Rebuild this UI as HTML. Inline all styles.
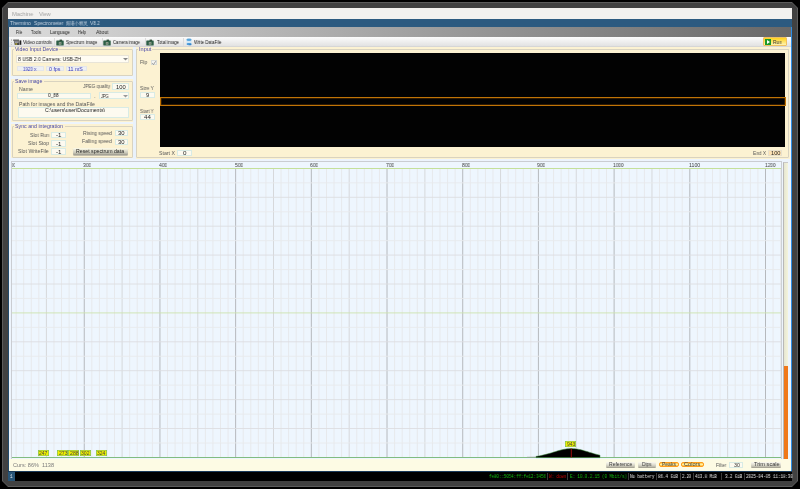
<!DOCTYPE html><html><head><meta charset="utf-8"><style>*{margin:0;padding:0;box-sizing:border-box}
html,body{width:800px;height:489px;overflow:hidden;background:#000;font-family:"Liberation Sans",sans-serif;position:relative}
.a{position:absolute}
.t{position:absolute;white-space:pre;line-height:1;transform-origin:0 0;will-change:transform}
.m{font-family:"Liberation Mono",monospace}
</style></head><body>
<div class="a" style="left:2px;top:2px;width:796px;height:485px;background:#5c5c5c;clip-path:polygon(6px 0,790px 0,796px 6px,796px 479px,790px 485px,6px 485px,0 479px,0 6px)"></div>
<div class="a" style="left:3px;top:3px;width:794px;height:483px;background:#414141;clip-path:polygon(5px 0,789px 0,794px 5px,794px 478px,789px 483px,5px 483px,0 478px,0 5px)"></div>
<div class="a" style="left:8px;top:8px;width:784px;height:11px;background:#f2f1ef"></div>
<div class="a" style="left:8px;top:19px;width:784px;height:8px;background:#2c5a80"></div>
<div class="a" style="left:8px;top:27px;width:784px;height:444px;background:#edf4fc"></div>
<div class="a" style="left:8px;top:27px;width:1px;height:444px;background:#224a6c"></div>
<div class="a" style="left:791px;top:27px;width:1px;height:444px;background:#2e8ee6"></div>
<div class="a" style="left:9px;top:27px;width:782px;height:9.700000000000003px;background:linear-gradient(90deg,#dcdcdc,#686868)"></div>
<div class="a" style="left:9px;top:36.7px;width:782px;height:9.899999999999999px;background:linear-gradient(#fcfcfc,#e2e2e2);border-bottom:1px solid #d6d6d6"></div>
<div class="a" style="left:54px;top:38px;width:1px;height:7.5px;background:#dcdcdc"></div>
<div class="a" style="left:101.6px;top:38px;width:1.0px;height:7.5px;background:#dcdcdc"></div>
<div class="a" style="left:145.4px;top:38px;width:1.0px;height:7.5px;background:#dcdcdc"></div>
<div class="a" style="left:183px;top:38px;width:1px;height:7.5px;background:#dcdcdc"></div>
<div class="a" style="left:10.5px;top:38.5px;width:1.0px;height:6.5px;border-left:1px dotted #c8c8c8"></div>
<div class="a" style="left:762.5px;top:37.4px;width:24.5px;height:9.0px;background:linear-gradient(#ffd21a,#fff3b0);border:1px solid #efc060;border-radius:1px"></div>
<div class="a" style="left:765px;top:39px;width:6px;height:6px;background:#1c9a2a"></div>
<svg class="a" style="left:765px;top:39px" width="6" height="6"><path d="M2 1 L5 3 L2 5 Z" fill="#fff"/></svg>
<svg class="a" style="left:56px;top:38.5px" width="8" height="7" viewBox="0 0 8 7"><rect x="0.3" y="1.6" width="7.4" height="4.8" rx="0.5" fill="#2e5e46"/><rect x="3.6" y="0.6" width="2.4" height="1.4" fill="#34503c"/><rect x="2.8" y="3.2" width="2.6" height="2.4" fill="#a8b4a4"/><rect x="3.4" y="3.8" width="1.4" height="1.2" fill="#6a7a68"/></svg>
<svg class="a" style="left:103.2px;top:38.5px" width="8" height="7" viewBox="0 0 8 7"><rect x="0.3" y="1.6" width="7.4" height="4.8" rx="0.5" fill="#2e5e46"/><rect x="3.6" y="0.6" width="2.4" height="1.4" fill="#34503c"/><rect x="2.8" y="3.2" width="2.6" height="2.4" fill="#a8b4a4"/><rect x="3.4" y="3.8" width="1.4" height="1.2" fill="#6a7a68"/></svg>
<svg class="a" style="left:146.4px;top:38.5px" width="8" height="7" viewBox="0 0 8 7"><rect x="0.3" y="1.6" width="7.4" height="4.8" rx="0.5" fill="#2e5e46"/><rect x="3.6" y="0.6" width="2.4" height="1.4" fill="#34503c"/><rect x="2.8" y="3.2" width="2.6" height="2.4" fill="#a8b4a4"/><rect x="3.4" y="3.8" width="1.4" height="1.2" fill="#6a7a68"/></svg>
<svg class="a" style="left:13px;top:38.5px" width="9" height="7" viewBox="0 0 9 7"><rect x="0.2" y="0.5" width="5.8" height="1.6" fill="#6a6a6a"/><path d="M1 2.2 L6 2.2 L6.2 6 L1.8 6 Z" fill="#4a4a4a"/><rect x="2" y="2.4" width="3.6" height="1.6" fill="#9a9aa0"/><ellipse cx="3.2" cy="5" rx="1.1" ry="0.7" fill="#c8b830"/><rect x="6.5" y="1.4" width="1.8" height="4.4" fill="#222"/></svg>
<svg class="a" style="left:185.5px;top:38px" width="6" height="8" viewBox="0 0 6 8"><rect x="0.5" y="1.5" width="5" height="5.5" fill="#cfe6f6"/><ellipse cx="3" cy="1.8" rx="2.6" ry="1.2" fill="#5aa6dc"/><path d="M0.8 5.2 Q3 4.6 5.4 5.4 L5.4 6.6 Q3 7.8 0.8 6.8 Z" fill="#4a9ad8"/><ellipse cx="4.2" cy="6.4" rx="1.2" ry="0.9" fill="#3a86c8"/></svg>
<div class="a" style="left:11px;top:47.2px;width:122px;height:29.299999999999997px;background:#fcf2d2"></div>
<div class="a" style="left:11.9px;top:49.3px;width:121.10px;height:26.60px;border:1px solid #d9d3c0;border-radius:1px"></div>
<div class="a" style="left:13.5px;top:48px;width:45.5px;height:3px;background:#fcf2d2"></div>
<div class="a" style="left:16.4px;top:54.8px;width:112.6px;height:8.400000000000006px;background:#fffcf3;border:1px solid #e8e4d8"></div>
<svg class="a" style="left:122.5px;top:58px" width="5" height="3"><path d="M0 0 L5 0 L2.5 2.5 Z" fill="#888"/></svg>
<div class="a" style="left:16.5px;top:66.2px;width:27.5px;height:5.299999999999997px;background:#eef0f4;border:1px solid #e4e6ea"></div>
<div class="a" style="left:46px;top:66.2px;width:17.5px;height:5.299999999999997px;background:#eef0f4;border:1px solid #e4e6ea"></div>
<div class="a" style="left:65.5px;top:66.2px;width:21.0px;height:5.299999999999997px;background:#eef0f4;border:1px solid #e4e6ea"></div>
<div class="a" style="left:11px;top:78.8px;width:122px;height:43.0px;background:#fcf2d2"></div>
<div class="a" style="left:11.9px;top:81.4px;width:121.10px;height:39.80px;border:1px solid #d9d3c0;border-radius:1px"></div>
<div class="a" style="left:13.5px;top:79.5px;width:30.0px;height:3.5px;background:#fcf2d2"></div>
<div class="a" style="left:111.8px;top:83.4px;width:17.000000000000014px;height:6.299999999999997px;background:#fdfaf0;border:1px solid #d8ebe5"></div>
<div class="a" style="left:16.5px;top:92.7px;width:74.5px;height:6.299999999999997px;background:#fdfaf0;border:1px solid #d8ebe5"></div>
<div class="a" style="left:99.4px;top:91.7px;width:29.5px;height:7.799999999999997px;background:#fdfaf0;border:1px solid #d8ebe5"></div>
<svg class="a" style="left:122.5px;top:95px" width="5" height="3"><path d="M0 0 L5 0 L2.5 2.5 Z" fill="#999"/></svg>
<div class="a" style="left:17.6px;top:107.2px;width:111.4px;height:10.5px;background:#fdfaf0;border:1px solid #d8ebe5"></div>
<div class="a" style="left:11px;top:123.6px;width:122px;height:34.80000000000001px;background:#fcf2d2"></div>
<div class="a" style="left:11.9px;top:126.2px;width:121.10px;height:31.60px;border:1px solid #d9d3c0;border-radius:1px"></div>
<div class="a" style="left:13.5px;top:124.3px;width:51.0px;height:3.700000000000003px;background:#fcf2d2"></div>
<div class="a" style="left:51px;top:131.6px;width:14.599999999999994px;height:6.599999999999994px;background:#fdfaf0;border:1px solid #d8ebe5"></div>
<div class="a" style="left:51px;top:140px;width:14.599999999999994px;height:6.599999999999994px;background:#fdfaf0;border:1px solid #d8ebe5"></div>
<div class="a" style="left:51px;top:148px;width:14.599999999999994px;height:6.599999999999994px;background:#fdfaf0;border:1px solid #d8ebe5"></div>
<div class="a" style="left:115.1px;top:130px;width:12.5px;height:6.199999999999989px;background:#fdfaf0;border:1px solid #d8ebe5"></div>
<div class="a" style="left:115.1px;top:138.5px;width:12.5px;height:6.300000000000011px;background:#fdfaf0;border:1px solid #d8ebe5"></div>
<div class="a" style="left:72.6px;top:148.4px;width:55.0px;height:6.400000000000006px;background:linear-gradient(#fdfbe8,#c8c6b8 70%,#9a988c);border-radius:1px;box-shadow:0 0.5px 0 #888"></div>
<div class="a" style="left:133px;top:47px;width:2.5px;height:112px;background:#e9f2fc"></div>
<div class="a" style="left:135.5px;top:47.2px;width:654.5px;height:111.39999999999999px;background:#fcf2d2"></div>
<div class="a" style="left:135.8px;top:49.2px;width:652.8px;height:9px;border-top:1px solid #d9d3c0"></div>
<div class="a" style="left:135.6px;top:49.2px;width:653px;height:109px;border:1px solid #d9d3c0;border-radius:1px"></div>
<div class="a" style="left:138px;top:48px;width:14px;height:3px;background:#fcf2d2"></div>
<div class="a" style="left:151px;top:59.5px;width:5.5px;height:5.299999999999997px;background:#f4f4f0;border:1px solid #d8dcd8"></div>
<svg class="a" style="left:151px;top:59.5px" width="6" height="6"><path d="M1.2 3.2 L2.5 4.5 L4.8 1.2" stroke="#777" stroke-width="0.7" fill="none"/></svg>
<div class="a" style="left:140px;top:92.4px;width:14.699999999999989px;height:5.199999999999989px;background:#fdfaf0;border:1px solid #d8ebe5"></div>
<div class="a" style="left:140px;top:114px;width:14.699999999999989px;height:5.599999999999994px;background:#fdfaf0;border:1px solid #d8ebe5"></div>
<div class="a" style="left:177.2px;top:150.2px;width:14.400000000000006px;height:5.800000000000011px;background:#fdfaf0;border:1px solid #d8ebe5"></div>
<div class="a" style="left:768px;top:150.1px;width:14.299999999999955px;height:5.900000000000006px;background:#fde2b4;border:1px solid #e8e0cc"></div>
<div class="a" style="left:159.6px;top:52.7px;width:625.4px;height:94.3px;background:#020202"></div>
<div class="a" style="left:160px;top:97.2px;width:625.5px;height:8.5px;border:1.3px solid #c07406;box-shadow:inset 0 0 0 0.5px #5a3204"></div>
<div class="a" style="left:11.3px;top:161.2px;width:770.7px;height:298.0px;background:#eef6fe;border:1px solid #cacdd2;border-bottom:none"></div>
<svg class="a" style="left:0;top:0" width="800" height="489" viewBox="0 0 800 489">
<line x1="16.12" y1="169" x2="16.12" y2="457" stroke="#e7e9ec" stroke-width="1"/>
<line x1="23.69" y1="169" x2="23.69" y2="457" stroke="#e7e9ec" stroke-width="1"/>
<line x1="31.26" y1="169" x2="31.26" y2="457" stroke="#e7e9ec" stroke-width="1"/>
<line x1="38.83" y1="169" x2="38.83" y2="457" stroke="#e7e9ec" stroke-width="1"/>
<line x1="46.4" y1="169" x2="46.4" y2="457" stroke="#d6d8db" stroke-width="1"/>
<line x1="53.97" y1="169" x2="53.97" y2="457" stroke="#e7e9ec" stroke-width="1"/>
<line x1="61.54" y1="169" x2="61.54" y2="457" stroke="#e7e9ec" stroke-width="1"/>
<line x1="69.11" y1="169" x2="69.11" y2="457" stroke="#e7e9ec" stroke-width="1"/>
<line x1="76.68" y1="169" x2="76.68" y2="457" stroke="#e7e9ec" stroke-width="1"/>
<line x1="84.25" y1="169" x2="84.25" y2="457" stroke="#b6b9bd" stroke-width="1"/>
<line x1="91.82" y1="169" x2="91.82" y2="457" stroke="#e7e9ec" stroke-width="1"/>
<line x1="99.39" y1="169" x2="99.39" y2="457" stroke="#e7e9ec" stroke-width="1"/>
<line x1="106.96" y1="169" x2="106.96" y2="457" stroke="#e7e9ec" stroke-width="1"/>
<line x1="114.53" y1="169" x2="114.53" y2="457" stroke="#e7e9ec" stroke-width="1"/>
<line x1="122.1" y1="169" x2="122.1" y2="457" stroke="#d6d8db" stroke-width="1"/>
<line x1="129.67" y1="169" x2="129.67" y2="457" stroke="#e7e9ec" stroke-width="1"/>
<line x1="137.24" y1="169" x2="137.24" y2="457" stroke="#e7e9ec" stroke-width="1"/>
<line x1="144.81" y1="169" x2="144.81" y2="457" stroke="#e7e9ec" stroke-width="1"/>
<line x1="152.38" y1="169" x2="152.38" y2="457" stroke="#e7e9ec" stroke-width="1"/>
<line x1="159.94" y1="169" x2="159.94" y2="457" stroke="#b6b9bd" stroke-width="1"/>
<line x1="167.51" y1="169" x2="167.51" y2="457" stroke="#e7e9ec" stroke-width="1"/>
<line x1="175.08" y1="169" x2="175.08" y2="457" stroke="#e7e9ec" stroke-width="1"/>
<line x1="182.65" y1="169" x2="182.65" y2="457" stroke="#e7e9ec" stroke-width="1"/>
<line x1="190.22" y1="169" x2="190.22" y2="457" stroke="#e7e9ec" stroke-width="1"/>
<line x1="197.79" y1="169" x2="197.79" y2="457" stroke="#d6d8db" stroke-width="1"/>
<line x1="205.36" y1="169" x2="205.36" y2="457" stroke="#e7e9ec" stroke-width="1"/>
<line x1="212.93" y1="169" x2="212.93" y2="457" stroke="#e7e9ec" stroke-width="1"/>
<line x1="220.5" y1="169" x2="220.5" y2="457" stroke="#e7e9ec" stroke-width="1"/>
<line x1="228.07" y1="169" x2="228.07" y2="457" stroke="#e7e9ec" stroke-width="1"/>
<line x1="235.64" y1="169" x2="235.64" y2="457" stroke="#b6b9bd" stroke-width="1"/>
<line x1="243.21" y1="169" x2="243.21" y2="457" stroke="#e7e9ec" stroke-width="1"/>
<line x1="250.78" y1="169" x2="250.78" y2="457" stroke="#e7e9ec" stroke-width="1"/>
<line x1="258.35" y1="169" x2="258.35" y2="457" stroke="#e7e9ec" stroke-width="1"/>
<line x1="265.92" y1="169" x2="265.92" y2="457" stroke="#e7e9ec" stroke-width="1"/>
<line x1="273.49" y1="169" x2="273.49" y2="457" stroke="#d6d8db" stroke-width="1"/>
<line x1="281.06" y1="169" x2="281.06" y2="457" stroke="#e7e9ec" stroke-width="1"/>
<line x1="288.62" y1="169" x2="288.62" y2="457" stroke="#e7e9ec" stroke-width="1"/>
<line x1="296.19" y1="169" x2="296.19" y2="457" stroke="#e7e9ec" stroke-width="1"/>
<line x1="303.76" y1="169" x2="303.76" y2="457" stroke="#e7e9ec" stroke-width="1"/>
<line x1="311.33" y1="169" x2="311.33" y2="457" stroke="#b6b9bd" stroke-width="1"/>
<line x1="318.9" y1="169" x2="318.9" y2="457" stroke="#e7e9ec" stroke-width="1"/>
<line x1="326.47" y1="169" x2="326.47" y2="457" stroke="#e7e9ec" stroke-width="1"/>
<line x1="334.04" y1="169" x2="334.04" y2="457" stroke="#e7e9ec" stroke-width="1"/>
<line x1="341.61" y1="169" x2="341.61" y2="457" stroke="#e7e9ec" stroke-width="1"/>
<line x1="349.18" y1="169" x2="349.18" y2="457" stroke="#d6d8db" stroke-width="1"/>
<line x1="356.75" y1="169" x2="356.75" y2="457" stroke="#e7e9ec" stroke-width="1"/>
<line x1="364.32" y1="169" x2="364.32" y2="457" stroke="#e7e9ec" stroke-width="1"/>
<line x1="371.89" y1="169" x2="371.89" y2="457" stroke="#e7e9ec" stroke-width="1"/>
<line x1="379.46" y1="169" x2="379.46" y2="457" stroke="#e7e9ec" stroke-width="1"/>
<line x1="387.03" y1="169" x2="387.03" y2="457" stroke="#b6b9bd" stroke-width="1"/>
<line x1="394.6" y1="169" x2="394.6" y2="457" stroke="#e7e9ec" stroke-width="1"/>
<line x1="402.17" y1="169" x2="402.17" y2="457" stroke="#e7e9ec" stroke-width="1"/>
<line x1="409.74" y1="169" x2="409.74" y2="457" stroke="#e7e9ec" stroke-width="1"/>
<line x1="417.31" y1="169" x2="417.31" y2="457" stroke="#e7e9ec" stroke-width="1"/>
<line x1="424.88" y1="169" x2="424.88" y2="457" stroke="#d6d8db" stroke-width="1"/>
<line x1="432.44" y1="169" x2="432.44" y2="457" stroke="#e7e9ec" stroke-width="1"/>
<line x1="440.01" y1="169" x2="440.01" y2="457" stroke="#e7e9ec" stroke-width="1"/>
<line x1="447.58" y1="169" x2="447.58" y2="457" stroke="#e7e9ec" stroke-width="1"/>
<line x1="455.15" y1="169" x2="455.15" y2="457" stroke="#e7e9ec" stroke-width="1"/>
<line x1="462.72" y1="169" x2="462.72" y2="457" stroke="#b6b9bd" stroke-width="1"/>
<line x1="470.29" y1="169" x2="470.29" y2="457" stroke="#e7e9ec" stroke-width="1"/>
<line x1="477.86" y1="169" x2="477.86" y2="457" stroke="#e7e9ec" stroke-width="1"/>
<line x1="485.43" y1="169" x2="485.43" y2="457" stroke="#e7e9ec" stroke-width="1"/>
<line x1="493.0" y1="169" x2="493.0" y2="457" stroke="#e7e9ec" stroke-width="1"/>
<line x1="500.57" y1="169" x2="500.57" y2="457" stroke="#d6d8db" stroke-width="1"/>
<line x1="508.14" y1="169" x2="508.14" y2="457" stroke="#e7e9ec" stroke-width="1"/>
<line x1="515.71" y1="169" x2="515.71" y2="457" stroke="#e7e9ec" stroke-width="1"/>
<line x1="523.28" y1="169" x2="523.28" y2="457" stroke="#e7e9ec" stroke-width="1"/>
<line x1="530.85" y1="169" x2="530.85" y2="457" stroke="#e7e9ec" stroke-width="1"/>
<line x1="538.42" y1="169" x2="538.42" y2="457" stroke="#b6b9bd" stroke-width="1"/>
<line x1="545.99" y1="169" x2="545.99" y2="457" stroke="#e7e9ec" stroke-width="1"/>
<line x1="553.56" y1="169" x2="553.56" y2="457" stroke="#e7e9ec" stroke-width="1"/>
<line x1="561.12" y1="169" x2="561.12" y2="457" stroke="#e7e9ec" stroke-width="1"/>
<line x1="568.69" y1="169" x2="568.69" y2="457" stroke="#e7e9ec" stroke-width="1"/>
<line x1="576.26" y1="169" x2="576.26" y2="457" stroke="#d6d8db" stroke-width="1"/>
<line x1="583.83" y1="169" x2="583.83" y2="457" stroke="#e7e9ec" stroke-width="1"/>
<line x1="591.4" y1="169" x2="591.4" y2="457" stroke="#e7e9ec" stroke-width="1"/>
<line x1="598.97" y1="169" x2="598.97" y2="457" stroke="#e7e9ec" stroke-width="1"/>
<line x1="606.54" y1="169" x2="606.54" y2="457" stroke="#e7e9ec" stroke-width="1"/>
<line x1="614.11" y1="169" x2="614.11" y2="457" stroke="#b6b9bd" stroke-width="1"/>
<line x1="621.68" y1="169" x2="621.68" y2="457" stroke="#e7e9ec" stroke-width="1"/>
<line x1="629.25" y1="169" x2="629.25" y2="457" stroke="#e7e9ec" stroke-width="1"/>
<line x1="636.82" y1="169" x2="636.82" y2="457" stroke="#e7e9ec" stroke-width="1"/>
<line x1="644.39" y1="169" x2="644.39" y2="457" stroke="#e7e9ec" stroke-width="1"/>
<line x1="651.96" y1="169" x2="651.96" y2="457" stroke="#d6d8db" stroke-width="1"/>
<line x1="659.53" y1="169" x2="659.53" y2="457" stroke="#e7e9ec" stroke-width="1"/>
<line x1="667.1" y1="169" x2="667.1" y2="457" stroke="#e7e9ec" stroke-width="1"/>
<line x1="674.67" y1="169" x2="674.67" y2="457" stroke="#e7e9ec" stroke-width="1"/>
<line x1="682.24" y1="169" x2="682.24" y2="457" stroke="#e7e9ec" stroke-width="1"/>
<line x1="689.81" y1="169" x2="689.81" y2="457" stroke="#b6b9bd" stroke-width="1"/>
<line x1="697.38" y1="169" x2="697.38" y2="457" stroke="#e7e9ec" stroke-width="1"/>
<line x1="704.94" y1="169" x2="704.94" y2="457" stroke="#e7e9ec" stroke-width="1"/>
<line x1="712.51" y1="169" x2="712.51" y2="457" stroke="#e7e9ec" stroke-width="1"/>
<line x1="720.08" y1="169" x2="720.08" y2="457" stroke="#e7e9ec" stroke-width="1"/>
<line x1="727.65" y1="169" x2="727.65" y2="457" stroke="#d6d8db" stroke-width="1"/>
<line x1="735.22" y1="169" x2="735.22" y2="457" stroke="#e7e9ec" stroke-width="1"/>
<line x1="742.79" y1="169" x2="742.79" y2="457" stroke="#e7e9ec" stroke-width="1"/>
<line x1="750.36" y1="169" x2="750.36" y2="457" stroke="#e7e9ec" stroke-width="1"/>
<line x1="757.93" y1="169" x2="757.93" y2="457" stroke="#e7e9ec" stroke-width="1"/>
<line x1="765.5" y1="169" x2="765.5" y2="457" stroke="#b6b9bd" stroke-width="1"/>
<line x1="773.07" y1="169" x2="773.07" y2="457" stroke="#e7e9ec" stroke-width="1"/>
<line x1="780.64" y1="169" x2="780.64" y2="457" stroke="#e7e9ec" stroke-width="1"/>
<line x1="12" y1="182.85" x2="781" y2="182.85" stroke="#e8eaec" stroke-width="0.9"/>
<line x1="12" y1="197.3" x2="781" y2="197.3" stroke="#dcdee1" stroke-width="0.9"/>
<line x1="12" y1="211.75" x2="781" y2="211.75" stroke="#e8eaec" stroke-width="0.9"/>
<line x1="12" y1="226.2" x2="781" y2="226.2" stroke="#dcdee1" stroke-width="0.9"/>
<line x1="12" y1="240.65" x2="781" y2="240.65" stroke="#e8eaec" stroke-width="0.9"/>
<line x1="12" y1="255.1" x2="781" y2="255.1" stroke="#dcdee1" stroke-width="0.9"/>
<line x1="12" y1="269.55" x2="781" y2="269.55" stroke="#e8eaec" stroke-width="0.9"/>
<line x1="12" y1="284.0" x2="781" y2="284.0" stroke="#dcdee1" stroke-width="0.9"/>
<line x1="12" y1="298.45" x2="781" y2="298.45" stroke="#e8eaec" stroke-width="0.9"/>
<line x1="12" y1="312.9" x2="781" y2="312.9" stroke="#cde4ae" stroke-width="0.9"/>
<line x1="12" y1="327.35" x2="781" y2="327.35" stroke="#e8eaec" stroke-width="0.9"/>
<line x1="12" y1="341.8" x2="781" y2="341.8" stroke="#dcdee1" stroke-width="0.9"/>
<line x1="12" y1="356.25" x2="781" y2="356.25" stroke="#e8eaec" stroke-width="0.9"/>
<line x1="12" y1="370.7" x2="781" y2="370.7" stroke="#dcdee1" stroke-width="0.9"/>
<line x1="12" y1="385.15" x2="781" y2="385.15" stroke="#e8eaec" stroke-width="0.9"/>
<line x1="12" y1="399.6" x2="781" y2="399.6" stroke="#dcdee1" stroke-width="0.9"/>
<line x1="12" y1="414.05" x2="781" y2="414.05" stroke="#e8eaec" stroke-width="0.9"/>
<line x1="12" y1="428.5" x2="781" y2="428.5" stroke="#dcdee1" stroke-width="0.9"/>
<line x1="12" y1="442.95" x2="781" y2="442.95" stroke="#e8eaec" stroke-width="0.9"/>
<line x1="12" y1="168.5" x2="781" y2="168.5" stroke="#c4e09a"/>
<line x1="12" y1="457.5" x2="781" y2="457.5" stroke="#80bc80"/>
</svg>
<svg class="a" style="left:0;top:0" width="800" height="489" viewBox="0 0 800 489"><path d="M536 457.6 L536 456.37 L537 456.22 L538 456.07 L539 455.90 L540 455.72 L541 455.52 L542 455.31 L543 455.09 L544 454.86 L545 454.62 L546 454.36 L547 454.09 L548 453.82 L549 453.53 L550 453.24 L551 452.94 L552 452.63 L553 452.33 L554 452.02 L555 451.71 L556 451.41 L557 451.11 L558 450.81 L559 450.53 L560 450.26 L561 450.00 L562 449.76 L563 449.54 L564 449.33 L565 449.15 L566 448.99 L567 448.86 L568 448.76 L569 448.68 L570 448.62 L571 448.60 L572 448.61 L573 448.64 L574 448.70 L575 448.79 L576 448.91 L577 449.05 L578 449.22 L579 449.41 L580 449.62 L581 449.85 L582 450.10 L583 450.37 L584 450.64 L585 450.93 L586 451.23 L587 451.53 L588 451.83 L589 452.14 L590 452.45 L591 452.76 L592 453.06 L593 453.36 L594 453.65 L595 453.93 L596 454.20 L597 454.46 L598 454.72 L599 454.96 L600 455.18 L600 457.6 Z" fill="#000" stroke="#3a8a3a" stroke-width="0.5"/><line x1="571.3" y1="448.6" x2="571.3" y2="457.5" stroke="#c01010" stroke-width="0.8"/><path d="M527 457.2 L536 457" stroke="#9a9a9a" stroke-width="0.6" fill="none"/></svg>
<div class="a" style="left:565.3px;top:441px;width:10.900000000000091px;height:6.199999999999989px;background:#f0f000;box-shadow:inset 0 0 0 0.6px #70b870"></div>
<div class="a" style="left:37.6px;top:450.1px;width:11.0px;height:6.0px;background:#f0f000;box-shadow:inset 0 0 0 0.6px #70b870"></div>
<div class="a" style="left:57px;top:450.1px;width:11.200000000000003px;height:6.0px;background:#f0f000;box-shadow:inset 0 0 0 0.6px #70b870"></div>
<div class="a" style="left:68.2px;top:450.1px;width:11.299999999999997px;height:6.0px;background:#f0f000;box-shadow:inset 0 0 0 0.6px #70b870"></div>
<div class="a" style="left:79.5px;top:450.1px;width:11.200000000000003px;height:6.0px;background:#f0f000;box-shadow:inset 0 0 0 0.6px #70b870"></div>
<div class="a" style="left:95.8px;top:450.1px;width:11.0px;height:6.0px;background:#f0f000;box-shadow:inset 0 0 0 0.6px #70b870"></div>
<div class="a" style="left:783.2px;top:162px;width:4.7999999999999545px;height:297px;background:linear-gradient(90deg,#e6e6d2,#f4f4dc);border-left:1px solid #b8b8b8;border-top:1px solid #c8c8c8"></div>
<div class="a" style="left:784.2px;top:366px;width:3.7999999999999545px;height:93px;background:#f07818"></div>
<div class="a" style="left:9px;top:459.2px;width:782px;height:11.800000000000011px;background:#fdfbe4"></div>
<div class="a" style="left:606px;top:462.2px;width:29px;height:5.0px;background:linear-gradient(#fbfaf2,#dcdacc 60%,#b8b6a8);border-radius:1px;box-shadow:0 0.7px 0 #8a887c"></div>
<div class="a" style="left:638px;top:462.2px;width:17.600000000000023px;height:5.0px;background:linear-gradient(#fbfaf2,#dcdacc 60%,#b8b6a8);border-radius:1px;box-shadow:0 0.7px 0 #8a887c"></div>
<div class="a" style="left:658.75px;top:462.2px;width:19.75px;height:5.199999999999989px;background:linear-gradient(#ffc850,#fff0a0 50%,#ffb838);border:1px solid #ff9c18;border-radius:2px"></div>
<div class="a" style="left:681px;top:462.2px;width:22.700000000000045px;height:5.199999999999989px;background:linear-gradient(#ffc850,#fff0a0 50%,#ffb838);border:1px solid #ff9c18;border-radius:2px"></div>
<div class="a" style="left:729px;top:462px;width:14px;height:6px;background:#fdfaf0;border:1px solid #d8ebe5"></div>
<div class="a" style="left:751px;top:462.2px;width:30px;height:5.0px;background:linear-gradient(#fbfaf2,#dcdacc 60%,#b8b6a8);border-radius:1px;box-shadow:0 0.7px 0 #8a887c"></div>
<div class="a" style="left:8px;top:471px;width:784px;height:10px;background:#000"></div>
<div class="a" style="left:8px;top:471px;width:784px;height:0.8000000000000114px;background:#1a3a5a"></div>
<div class="a" style="left:8px;top:472px;width:7px;height:8.5px;background:#285577"></div>
<div class="a" style="left:546.5px;top:472.5px;width:0.7999999999999545px;height:7.5px;background:#3a3a3a"></div>
<div class="a" style="left:567px;top:472.5px;width:0.7999999999999545px;height:7.5px;background:#3a3a3a"></div>
<div class="a" style="left:627.5px;top:472.5px;width:0.7999999999999545px;height:7.5px;background:#3a3a3a"></div>
<div class="a" style="left:655.5px;top:472.5px;width:0.7999999999999545px;height:7.5px;background:#3a3a3a"></div>
<div class="a" style="left:680px;top:472.5px;width:0.7999999999999545px;height:7.5px;background:#3a3a3a"></div>
<div class="a" style="left:692.8px;top:472.5px;width:0.7999999999999545px;height:7.5px;background:#3a3a3a"></div>
<div class="a" style="left:721px;top:472.5px;width:0.7999999999999545px;height:7.5px;background:#3a3a3a"></div>
<div class="a" style="left:743.5px;top:472.5px;width:0.7999999999999545px;height:7.5px;background:#3a3a3a"></div>
<div class="t" id="t0" style="left:11.75px;top:10.90px;font-size:6px;color:#a2a2a2;transform:scaleX(0.9386);">Machine</div>
<div class="t" id="t1" style="left:39.10px;top:10.90px;font-size:6px;color:#a2a2a2;transform:scaleX(0.9000);">View</div>
<div class="t" id="t2" style="left:9.60px;top:21.20px;font-size:5.2px;color:#c4d2e0;transform:scaleX(0.9500);">Thermino</div>
<div class="t" id="t3" style="left:33.60px;top:21.00px;font-size:5.2px;color:#c4d2e0;transform:scaleX(0.9419);">Spectrometer</div>
<div class="t" id="t4" style="left:66.00px;top:21.70px;font-size:4.6px;color:#c4d2e0;transform:scaleX(0.8600);">频谱小精灵</div>
<div class="t" id="t5" style="left:89.50px;top:21.20px;font-size:5.2px;color:#c4d2e0;transform:scaleX(0.9250);">V8.2</div>
<div class="t" id="t6" style="left:15.90px;top:30.00px;font-size:5.3px;color:#2a2a2a;transform:scaleX(0.7500);">File</div>
<div class="t" id="t7" style="left:31.25px;top:30.00px;font-size:5.3px;color:#2a2a2a;transform:scaleX(0.8125);">Tools</div>
<div class="t" id="t8" style="left:50.00px;top:29.50px;font-size:5.3px;color:#2a2a2a;transform:scaleX(0.8478);">Language</div>
<div class="t" id="t9" style="left:78.00px;top:29.50px;font-size:5.3px;color:#2a2a2a;transform:scaleX(0.7273);">Help</div>
<div class="t" id="t10" style="left:95.50px;top:30.00px;font-size:5.3px;color:#2a2a2a;transform:scaleX(0.8929);">About</div>
<div class="t" id="t11" style="left:22.90px;top:40.00px;font-size:5px;color:#222;transform:scaleX(0.9161);">Video controls</div>
<div class="t" id="t12" style="left:65.70px;top:39.50px;font-size:5px;color:#222;transform:scaleX(0.8639);">Spectrum image</div>
<div class="t" id="t13" style="left:113.00px;top:39.50px;font-size:5px;color:#222;transform:scaleX(0.8212);">Camera image</div>
<div class="t" id="t14" style="left:156.50px;top:39.50px;font-size:5px;color:#222;transform:scaleX(0.8600);">Total image</div>
<div class="t" id="t15" style="left:194.00px;top:40.00px;font-size:5px;color:#222;transform:scaleX(0.8710);">Write DataFile</div>
<div class="t" id="t16" style="left:773.00px;top:40.00px;font-size:5px;color:#333;transform:scaleX(0.9444);">Run</div>
<div class="t" id="t17" style="left:15.20px;top:47.10px;font-size:5.2px;color:#4848a8;transform:scaleX(0.9953);">Video Input Device</div>
<div class="t" id="t18" style="left:18.00px;top:57.00px;font-size:5.3px;color:#222;transform:scaleX(0.9403);">8 USB 2.0 Camera: USB-ZH</div>
<div class="t" id="t19" style="left:22.80px;top:67.00px;font-size:5.2px;color:#3c3cb8;transform:scaleX(0.8467);">1920 x</div>
<div class="t" id="t20" style="left:49.00px;top:66.50px;font-size:5.2px;color:#3c3cb8;transform:scaleX(1.0182);">0 fps</div>
<div class="t" id="t21" style="left:68.00px;top:67.00px;font-size:5.2px;color:#3c3cb8;transform:scaleX(1.0133);">11 mS</div>
<div class="t" id="t22" style="left:15.40px;top:78.70px;font-size:5.2px;color:#4848a8;transform:scaleX(0.9852);">Save image</div>
<div class="t" id="t23" style="left:19.00px;top:87.00px;font-size:5.2px;color:#585858;transform:scaleX(0.9643);">Name</div>
<div class="t" id="t24" style="left:83.00px;top:84.10px;font-size:5.2px;color:#585858;transform:scaleX(0.9067);">JPEG quality</div>
<div class="t" id="t25" style="left:115.80px;top:84.60px;font-size:5.4px;color:#222;transform:scaleX(1.0778);">100</div>
<div class="t" id="t26" style="left:48.00px;top:93.30px;font-size:5.2px;color:#222;transform:scaleX(0.9167);">0_88</div>
<div class="t" id="t27" style="left:94.20px;top:93.50px;font-size:5.2px;color:#555;transform:scaleX(1.2000);">.</div>
<div class="t" id="t28" style="left:100.50px;top:93.60px;font-size:5.2px;color:#222;transform:scaleX(0.7500);">JPG</div>
<div class="t" id="t29" style="left:19.00px;top:101.90px;font-size:5.2px;color:#585858;transform:scaleX(1.0000);">Path for images and the DataFile</div>
<div class="t" id="t30" style="left:44.50px;top:108.20px;font-size:5.2px;color:#222;transform:scaleX(1.0000);">C:\users\user\Documents\</div>
<div class="t" id="t31" style="left:15.30px;top:123.50px;font-size:5.2px;color:#4848a8;transform:scaleX(1.0149);">Sync and integration</div>
<div class="t" id="t32" style="left:29.50px;top:133.30px;font-size:5.2px;color:#585858;transform:scaleX(0.9650);">Slot Run</div>
<div class="t" id="t33" style="left:28.00px;top:140.70px;font-size:5.2px;color:#585858;transform:scaleX(0.9905);">Slot Stop</div>
<div class="t" id="t34" style="left:18.00px;top:149.10px;font-size:5.2px;color:#585858;transform:scaleX(0.9935);">Slot WriteFile</div>
<div class="t" id="t35" style="left:55.80px;top:133.10px;font-size:5.4px;color:#222;transform:scaleX(1.1400);">-1</div>
<div class="t" id="t36" style="left:55.80px;top:141.50px;font-size:5.4px;color:#222;transform:scaleX(1.1400);">-1</div>
<div class="t" id="t37" style="left:55.80px;top:149.50px;font-size:5.4px;color:#222;transform:scaleX(1.1400);">-1</div>
<div class="t" id="t38" style="left:83.00px;top:130.80px;font-size:5.2px;color:#585858;transform:scaleX(0.9667);">Rising speed</div>
<div class="t" id="t39" style="left:82.00px;top:139.00px;font-size:5.2px;color:#585858;transform:scaleX(0.9677);">Falling speed</div>
<div class="t" id="t40" style="left:118.20px;top:131.20px;font-size:5.4px;color:#222;transform:scaleX(1.1000);">30</div>
<div class="t" id="t41" style="left:118.20px;top:139.60px;font-size:5.4px;color:#222;transform:scaleX(1.1000);">30</div>
<div class="t" id="t42" style="left:75.80px;top:148.60px;font-size:5.2px;color:#222;transform:scaleX(1.0042);">Reset spectrum data</div>
<div class="t" id="t43" style="left:139.20px;top:47.10px;font-size:5.2px;color:#4848a8;transform:scaleX(1.0727);">Input</div>
<div class="t" id="t44" style="left:140.00px;top:59.70px;font-size:5.2px;color:#585858;transform:scaleX(0.8750);">Flip</div>
<div class="t" id="t45" style="left:140.00px;top:86.30px;font-size:5.2px;color:#585858;transform:scaleX(0.9200);">Size Y</div>
<div class="t" id="t46" style="left:145.80px;top:93.00px;font-size:5.4px;color:#222;transform:scaleX(1.0667);">9</div>
<div class="t" id="t47" style="left:140.00px;top:108.80px;font-size:5.2px;color:#585858;transform:scaleX(0.8750);">Start Y</div>
<div class="t" id="t48" style="left:144.20px;top:114.80px;font-size:5.4px;color:#222;transform:scaleX(1.1333);">44</div>
<div class="t" id="t49" style="left:159.20px;top:151.20px;font-size:5.2px;color:#585858;transform:scaleX(0.9750);">Start X</div>
<div class="t" id="t50" style="left:182.50px;top:151.20px;font-size:5.4px;color:#222;transform:scaleX(1.1667);">0</div>
<div class="t" id="t51" style="left:753.00px;top:151.30px;font-size:5.2px;color:#585858;transform:scaleX(0.9214);">End X</div>
<div class="t" id="t52" style="left:771.00px;top:151.20px;font-size:5.4px;color:#222;transform:scaleX(1.0556);">100</div>
<div class="t" id="t53" style="left:83.25px;top:162.60px;font-size:5.2px;color:#383838;transform:scaleX(0.9444);">300</div>
<div class="t" id="t54" style="left:158.94px;top:162.60px;font-size:5.2px;color:#383838;transform:scaleX(0.9444);">400</div>
<div class="t" id="t55" style="left:234.64px;top:162.60px;font-size:5.2px;color:#383838;transform:scaleX(0.9444);">500</div>
<div class="t" id="t56" style="left:310.33px;top:162.60px;font-size:5.2px;color:#383838;transform:scaleX(0.9444);">600</div>
<div class="t" id="t57" style="left:386.03px;top:162.60px;font-size:5.2px;color:#383838;transform:scaleX(0.9444);">700</div>
<div class="t" id="t58" style="left:461.72px;top:162.60px;font-size:5.2px;color:#383838;transform:scaleX(0.9444);">800</div>
<div class="t" id="t59" style="left:537.42px;top:162.60px;font-size:5.2px;color:#383838;transform:scaleX(0.9444);">900</div>
<div class="t" id="t60" style="left:613.11px;top:162.60px;font-size:5.2px;color:#383838;transform:scaleX(0.9167);">1000</div>
<div class="t" id="t61" style="left:688.81px;top:162.60px;font-size:5.2px;color:#383838;transform:scaleX(1.0000);">1100</div>
<div class="t" id="t62" style="left:764.50px;top:162.60px;font-size:5.2px;color:#383838;transform:scaleX(0.9167);">1200</div>
<div class="t" id="t63" style="left:12.00px;top:162.60px;font-size:5.2px;color:#444;transform:scaleX(0.5833);">00</div>
<div class="t" id="t64" style="left:566.80px;top:442.10px;font-size:5px;color:#444;transform:scaleX(0.9875);">943</div>
<div class="t" id="t65" style="left:39.10px;top:451.10px;font-size:5px;color:#444;transform:scaleX(1.0000);">247</div>
<div class="t" id="t66" style="left:58.50px;top:451.10px;font-size:5px;color:#444;transform:scaleX(1.0250);">273</div>
<div class="t" id="t67" style="left:69.70px;top:451.10px;font-size:5px;color:#444;transform:scaleX(1.0375);">288</div>
<div class="t" id="t68" style="left:81.00px;top:451.10px;font-size:5px;color:#444;transform:scaleX(1.0250);">302</div>
<div class="t" id="t69" style="left:97.30px;top:451.10px;font-size:5px;color:#444;transform:scaleX(1.0000);">324</div>
<div class="t" id="t70" style="left:13.10px;top:463.00px;font-size:5.4px;color:#7a7a7a;transform:scaleX(1.0325);">Curs: 86%  1138</div>
<div class="t" id="t71" style="left:608.75px;top:462.30px;font-size:5px;color:#3a3a3a;transform:scaleX(1.0065);">Reference</div>
<div class="t" id="t72" style="left:641.90px;top:461.80px;font-size:5px;color:#3a3a3a;transform:scaleX(0.9350);">Dips</div>
<div class="t" id="t73" style="left:661.90px;top:462.30px;font-size:5px;color:#3a3a3a;transform:scaleX(0.9786);">Peaks</div>
<div class="t" id="t74" style="left:684.20px;top:462.30px;font-size:5px;color:#3a3a3a;transform:scaleX(1.1286);">Colors</div>
<div class="t" id="t75" style="left:715.70px;top:462.80px;font-size:5px;color:#555;transform:scaleX(0.9273);">Filter</div>
<div class="t" id="t76" style="left:733.70px;top:463.00px;font-size:5.3px;color:#333;transform:scaleX(0.9500);">30</div>
<div class="t" id="t77" style="left:754.00px;top:462.30px;font-size:5px;color:#3a3a3a;transform:scaleX(1.1261);">Trim scale</div>
<div class="t m" id="t78" style="left:10.40px;top:475.30px;font-size:5.2px;color:#e8eef4;transform:scaleX(0.8333);">1</div>
<div class="t m" id="t79" style="left:489.00px;top:475.10px;font-size:4.6px;color:#10c010;transform:scaleX(0.8968);">fe80::5054:ff:fe12:3456</div>
<div class="t m" id="t80" style="left:549.00px;top:475.10px;font-size:4.6px;color:#c00000;transform:scaleX(0.8947);">W: down</div>
<div class="t m" id="t81" style="left:569.50px;top:474.60px;font-size:4.6px;color:#10c010;transform:scaleX(0.8968);">E: 10.0.2.15 (0 Mbit/s)</div>
<div class="t m" id="t82" style="left:630.00px;top:474.60px;font-size:4.6px;color:#e8e8e8;transform:scaleX(0.8889);">No battery</div>
<div class="t m" id="t83" style="left:658.00px;top:475.10px;font-size:4.6px;color:#e8e8e8;transform:scaleX(0.9091);">86.4 GiB</div>
<div class="t m" id="t84" style="left:682.00px;top:475.10px;font-size:4.6px;color:#e8e8e8;transform:scaleX(0.8182);">2.20</div>
<div class="t m" id="t85" style="left:695.00px;top:475.10px;font-size:4.6px;color:#e8e8e8;transform:scaleX(0.8800);">413.8 MiB</div>
<div class="t m" id="t86" style="left:725.00px;top:475.10px;font-size:4.6px;color:#e8e8e8;transform:scaleX(0.8947);">3.2 GiB</div>
<div class="t m" id="t87" style="left:745.50px;top:475.10px;font-size:4.6px;color:#e8e8e8;transform:scaleX(0.8942);">2025-04-05 11:18:30</div>
</body></html>
